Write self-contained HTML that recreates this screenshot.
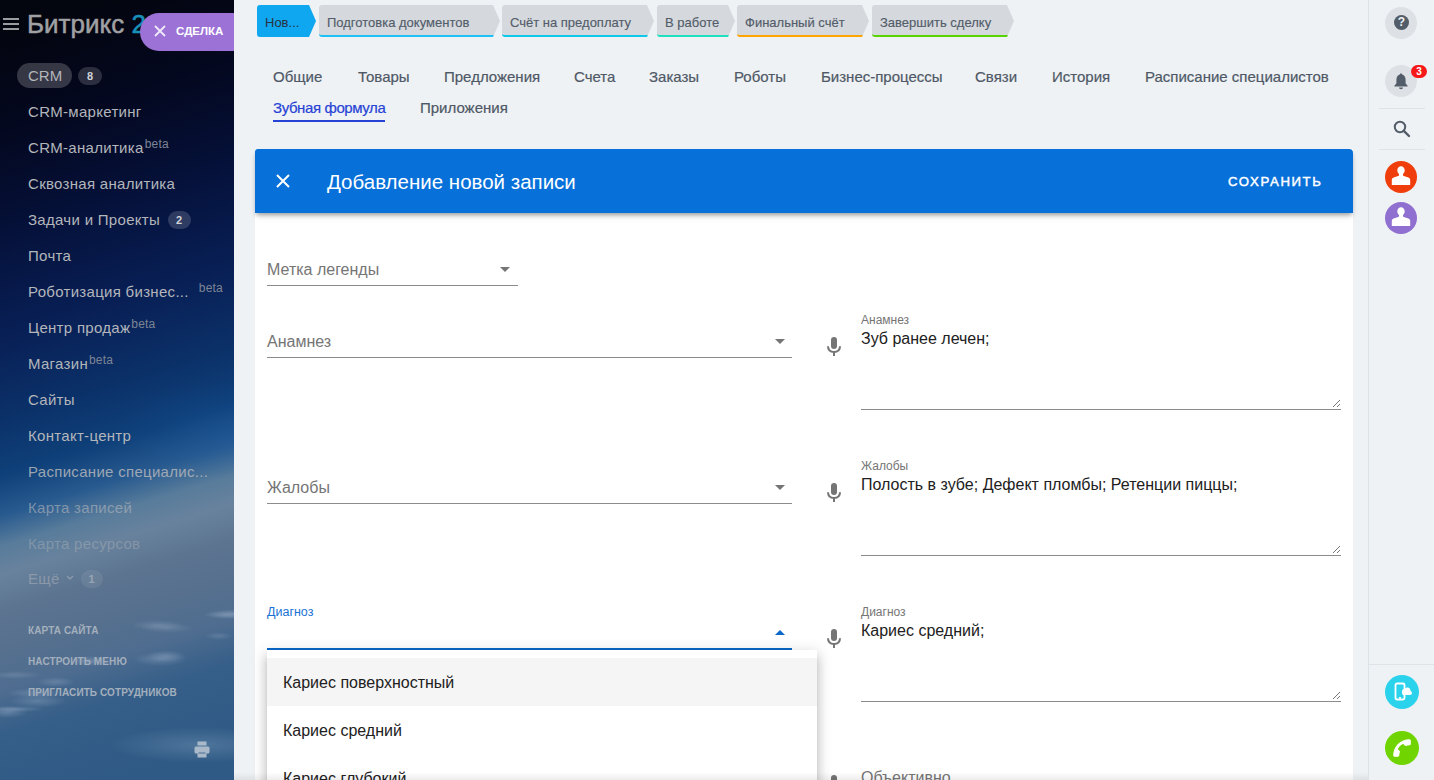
<!DOCTYPE html>
<html><head><meta charset="utf-8">
<style>
*{box-sizing:border-box;margin:0;padding:0}
html,body{width:1434px;height:780px;overflow:hidden;background:#eef2f4;font-family:"Liberation Sans",sans-serif}
.abs{position:absolute}
#side{position:absolute;left:0;top:0;width:234px;height:780px;overflow:hidden;
background:
radial-gradient(ellipse 19px 5px at 56px 682px,rgba(190,205,225,0.24),rgba(190,205,225,0)),
radial-gradient(ellipse 27px 4px at 15px 675px,rgba(190,205,225,0.19),rgba(190,205,225,0)),
radial-gradient(ellipse 27px 5px at 233px 614px,rgba(190,205,225,0.25),rgba(190,205,225,0)),
radial-gradient(ellipse 28px 5px at 35px 693px,rgba(190,205,225,0.26),rgba(190,205,225,0)),
radial-gradient(ellipse 26px 5px at 157px 625px,rgba(190,205,225,0.20),rgba(190,205,225,0)),
radial-gradient(ellipse 21px 6px at 7px 712px,rgba(190,205,225,0.28),rgba(190,205,225,0)),
radial-gradient(ellipse 19px 6px at 167px 656px,rgba(190,205,225,0.22),rgba(190,205,225,0)),
radial-gradient(ellipse 14px 4px at 219px 636px,rgba(190,205,225,0.18),rgba(190,205,225,0)),
radial-gradient(ellipse 23px 4px at 226px 615px,rgba(190,205,225,0.23),rgba(190,205,225,0)),
radial-gradient(ellipse 23px 5px at 90px 661px,rgba(190,205,225,0.29),rgba(190,205,225,0)),
radial-gradient(ellipse 27px 7px at 160px 659px,rgba(190,205,225,0.25),rgba(190,205,225,0)),
radial-gradient(ellipse 29px 7px at 38px 701px,rgba(190,205,225,0.24),rgba(190,205,225,0)),
radial-gradient(ellipse 27px 5px at 167px 628px,rgba(190,205,225,0.19),rgba(190,205,225,0)),
radial-gradient(ellipse 30px 3px at 15px 709px,rgba(190,205,225,0.27),rgba(190,205,225,0)),
radial-gradient(ellipse 90px 18px at 200px 745px,rgba(170,195,220,.25),rgba(170,195,220,0)),
radial-gradient(ellipse 120px 50px at 234px 430px,rgba(20,90,170,.25),rgba(20,90,170,0)),
linear-gradient(163deg,#03050f 34px,#040820 130px,#05113a 225px,#081f55 321px,#0b3068 397px,#0f4079 455px,#285a8f 493px,#587c9b 523px,#68829d 550px,#5c7490 584px,#56708e 622px,#4f6d90 660px,#355e88 703px,#2f5a85 780px)}
.mi{position:absolute;left:28px;font-size:15px;letter-spacing:.3px;color:#b3b6bb;white-space:nowrap}
.mi sup{font-size:12px;color:#7d8595;vertical-align:0;position:relative;top:-5px;margin-left:1px;letter-spacing:.2px}
.cnt{display:inline-block;background:rgba(255,255,255,.16);border-radius:10px;color:#d0d3d8;font-size:11px;font-weight:bold;height:18px;line-height:18px;padding:0 8px;margin-left:8px;vertical-align:1px}
.bl{position:absolute;left:28px;font-size:10px;font-weight:bold;color:#a3afbd;letter-spacing:.1px}
#main{position:absolute;left:234px;top:0;width:1134px;height:780px;background:#eef2f4}
.st{position:absolute;top:5px;height:32px;background:#d5d9de;color:#535c69;font-size:13px;line-height:32px;padding-left:8px;white-space:nowrap}
.tab{position:absolute;font-size:15px;color:#4f5866;white-space:nowrap;-webkit-text-stroke:.2px currentColor}
#rp{position:absolute;left:1368px;top:0;width:66px;height:780px;background:#eef2f4;border-left:1px solid #dbe3e7}

.stg{position:absolute;top:5px;height:32px;line-height:35px;font-size:13px;color:#535c69;-webkit-text-stroke:.15px currentColor;padding-left:8px;white-space:nowrap;background:#d5d9de;border-bottom:2px solid;clip-path:polygon(0 0,calc(100% - 7px) 0,100% 50%,calc(100% - 7px) 100%,0 100%);border-radius:3px 0 0 3px}
#modal{position:absolute;left:255px;top:149px;width:1098px;height:640px;background:#fff}
#mh{position:absolute;left:0;top:0;width:1098px;height:64px;background:#0770d9;border-radius:3px 4px 0 0;box-shadow:0 3px 4px -1px rgba(0,0,0,.3),0 5px 8px -3px rgba(0,0,0,.15);z-index:2}
.sel{position:absolute;left:12px;height:24px;font-size:16px;color:#757575;border-bottom:1px solid #8c8c8c;line-height:16px;white-space:nowrap}
.arr{position:absolute;top:5px;width:0;height:0;border-left:5px solid transparent;border-right:5px solid transparent;border-top:5px solid #757575}
.ta{position:absolute;left:606px;width:480px;height:97px;border-bottom:1px solid #8c8c8c}
.lbl{position:absolute;left:0;top:0;font-size:12px;color:#757575;white-space:nowrap}
.val{position:absolute;left:0;top:17px;font-size:16px;color:#212121;white-space:nowrap}
#dd{position:absolute;left:12px;top:501px;width:550px;height:200px;background:#fff;box-shadow:0 5px 5px -3px rgba(0,0,0,.2),0 8px 10px 1px rgba(0,0,0,.14),0 3px 14px 2px rgba(0,0,0,.12);padding-top:8px;z-index:3}
.it{height:48px;line-height:50px;padding-left:16px;font-size:16px;color:#212121;white-space:nowrap}
#shade{position:absolute;left:234px;top:772px;width:1134px;height:8px;background:linear-gradient(rgba(0,0,0,0),rgba(0,0,0,.07));z-index:5}

.av{left:16px;width:32px;height:32px;border-radius:50%;overflow:hidden}
</style></head><body>
<div id="side">
  <div class="abs" style="left:3px;top:18px;width:16px;height:2px;background:#9a9ca0"></div>
  <div class="abs" style="left:3px;top:23px;width:16px;height:2px;background:#9a9ca0"></div>
  <div class="abs" style="left:3px;top:28px;width:16px;height:2px;background:#9a9ca0"></div>
  <div class="abs" style="left:27px;top:9px;font-size:26px;color:#a0a1a3;white-space:nowrap;-webkit-text-stroke:.5px #a0a1a3">Битрикс <span style="color:#1890b8;-webkit-text-stroke:.5px #1890b8">24</span></div>
  <div class="abs" style="left:140px;top:13px;width:110px;height:38px;border-radius:19px 0 0 19px;background:#9c72d6"></div>
  <div class="abs" style="left:153px;top:24px;width:14px;height:14px">
    <svg width="14" height="14" viewBox="0 0 14 14"><path d="M2 2L12 12M12 2L2 12" stroke="#f0eaf8" stroke-width="1.8"/></svg></div>
  <div class="abs" style="left:176px;top:25px;font-size:11.5px;font-weight:bold;color:#fff;letter-spacing:0">СДЕЛКА</div>
  <div class="abs" style="left:17px;top:63px;width:55px;height:25px;border-radius:13px;background:rgba(255,255,255,.2)"></div>
  <div class="mi" style="top:67px;left:28px;letter-spacing:0">CRM</div>
  <div class="abs" style="left:78px;top:67px;width:24px;height:18px;border-radius:9px;background:rgba(255,255,255,.16);color:#d0d3d8;font-size:11px;font-weight:bold;text-align:center;line-height:18px">8</div>
  <div class="mi" style="top:103px">CRM-маркетинг</div>
  <div class="mi" style="top:139px">CRM-аналитика<sup>beta</sup></div>
  <div class="mi" style="top:175px">Сквозная аналитика</div>
  <div class="mi" style="top:211px">Задачи и Проекты<span class="cnt">2</span></div>
  <div class="mi" style="top:247px">Почта</div>
  <div class="mi" style="top:283px">Роботизация бизнес...<sup style="margin-left:10px">beta</sup></div>
  <div class="mi" style="top:319px">Центр продаж<sup>beta</sup></div>
  <div class="mi" style="top:355px">Магазин<sup>beta</sup></div>
  <div class="mi" style="top:391px">Сайты</div>
  <div class="mi" style="top:427px">Контакт-центр</div>
  <div class="mi" style="top:463px;opacity:.85">Расписание специалис...</div>
  <div class="mi" style="top:499px;opacity:.6">Карта записей</div>
  <div class="mi" style="top:535px;opacity:.42">Карта ресурсов</div>
  <div class="mi" style="top:570px;opacity:.5">Ещё<svg width="14" height="10" style="margin-left:3px;vertical-align:1px"><path d="M4 3L7 6L10 3" stroke="#babdc2" stroke-width="1.3" fill="none"/></svg><span class="cnt" style="margin-left:4px">1</span></div>
  <div class="bl" style="top:625px">КАРТА САЙТА</div>
  <div class="bl" style="top:656px">НАСТРОИТЬ МЕНЮ</div>
  <div class="bl" style="top:687px">ПРИГЛАСИТЬ СОТРУДНИКОВ</div>
  <svg class="abs" style="left:194px;top:741px" width="16" height="17" viewBox="0 0 16 17"><rect x="3.5" y="0.5" width="9" height="4" fill="#a9b9c9"/><rect x="0.5" y="5.5" width="15" height="7" rx="1.5" fill="#a9b9c9"/><rect x="3.5" y="10" width="9" height="6.5" fill="#a9b9c9"/><rect x="4.5" y="11.5" width="7" height="1" fill="#4a6f96"/></svg>
</div>

<div id="main">
  <svg class="abs" style="left:23px;top:5px" width="60" height="32"><path d="M3 0H52L59 16L52 32H3Q0 32 0 29V3Q0 0 3 0Z" fill="#0fa7f0"/></svg>
  <div class="abs" style="left:31px;top:6.5px;line-height:32px;font-size:13px;color:#2a3140">Нов...</div>
  <div class="stg" style="left:85px;width:181px;border-color:#1ec1f5">Подготовка документов</div>
  <div class="stg" style="left:268px;width:152px;border-color:#0fc8ea">Счёт на предоплату</div>
  <div class="stg" style="left:423px;width:78px;border-color:#1fe0bd">В работе</div>
  <div class="stg" style="left:503px;width:132px;border-color:#ffa400">Финальный счёт</div>
  <div class="stg" style="left:638px;width:142px;border-color:#5ad400">Завершить сделку</div>

  <div class="tab" style="left:39px;top:68px">Общие</div>
  <div class="tab" style="left:124px;top:68px">Товары</div>
  <div class="tab" style="left:210px;top:68px">Предложения</div>
  <div class="tab" style="left:340px;top:68px">Счета</div>
  <div class="tab" style="left:415px;top:68px">Заказы</div>
  <div class="tab" style="left:500px;top:68px">Роботы</div>
  <div class="tab" style="left:587px;top:68px">Бизнес-процессы</div>
  <div class="tab" style="left:741px;top:68px">Связи</div>
  <div class="tab" style="left:818px;top:68px">История</div>
  <div class="tab" style="left:911px;top:68px">Расписание специалистов</div>
  <div class="tab" style="left:39px;top:99px;color:#2743d6;letter-spacing:-.4px">Зубная формула</div>
  <div class="abs" style="left:39px;top:120px;width:112px;height:2px;background:#2743d6"></div>
  <div class="tab" style="left:186px;top:99px">Приложения</div>
</div>
<div id="modal">
  <div id="mh">
    <svg class="abs" style="left:21px;top:25px" width="14" height="14" viewBox="0 0 14 14"><path d="M1 1L13 13M13 1L1 13" stroke="#fff" stroke-width="2"/></svg>
    <div class="abs" style="left:72px;top:21px;font-size:20.5px;color:#fff;white-space:nowrap">Добавление новой записи</div>
    <div class="abs" style="left:973px;top:25px;font-size:13.2px;color:#fff;letter-spacing:1.6px;-webkit-text-stroke:.45px #fff">СОХРАНИТЬ</div>
  </div>
  <!-- selects -->
  <div class="sel" style="top:113px;width:251px">Метка легенды<i class="arr" style="left:233px"></i></div>
  <div class="sel" style="top:185px;width:525px">Анамнез<i class="arr" style="left:508px"></i></div>
  <div class="sel" style="top:331px;width:525px">Жалобы<i class="arr" style="left:508px"></i></div>
  <div class="abs" style="left:12px;top:456px;font-size:12.5px;color:#1a73d4">Диагноз</div>
  <div class="abs" style="left:12px;top:499px;width:525px;height:2px;background:#0b68c9"></div>
  <svg class="abs" style="left:520px;top:481px" width="10" height="5"><path d="M0 5L5 0L10 5Z" fill="#0b68c9"/></svg>
  <!-- mics -->
  <svg class="abs" style="left:572px;top:188px" width="14" height="19" viewBox="0 0 14 19"><rect x="4" y="0" width="6" height="12" rx="3" fill="#757575"/><path d="M1 9.3Q1 15 7 15Q13 15 13 9.3" stroke="#757575" stroke-width="2" fill="none"/><rect x="6" y="14.5" width="2" height="4.5" fill="#757575"/></svg> <svg class="abs" style="left:572px;top:334px" width="14" height="19" viewBox="0 0 14 19"><rect x="4" y="0" width="6" height="12" rx="3" fill="#757575"/><path d="M1 9.3Q1 15 7 15Q13 15 13 9.3" stroke="#757575" stroke-width="2" fill="none"/><rect x="6" y="14.5" width="2" height="4.5" fill="#757575"/></svg> <svg class="abs" style="left:572px;top:480px" width="14" height="19" viewBox="0 0 14 19"><rect x="4" y="0" width="6" height="12" rx="3" fill="#757575"/><path d="M1 9.3Q1 15 7 15Q13 15 13 9.3" stroke="#757575" stroke-width="2" fill="none"/><rect x="6" y="14.5" width="2" height="4.5" fill="#757575"/></svg> <svg class="abs" style="left:572px;top:626px" width="14" height="19" viewBox="0 0 14 19"><rect x="4" y="0" width="6" height="12" rx="3" fill="#757575"/><path d="M1 9.3Q1 15 7 15Q13 15 13 9.3" stroke="#757575" stroke-width="2" fill="none"/><rect x="6" y="14.5" width="2" height="4.5" fill="#757575"/></svg>
  <!-- textareas -->
  <div class="ta" style="top:164px">
    <div class="lbl">Анамнез</div><div class="val">Зуб ранее лечен;</div></div>
  <div class="ta" style="top:310px">
    <div class="lbl">Жалобы</div><div class="val">Полость в зубе; Дефект пломбы; Ретенции пиццы;</div></div>
  <div class="ta" style="top:456px">
    <div class="lbl">Диагноз</div><div class="val">Кариес средний;</div></div>
  <div class="abs" style="left:606px;top:620px;font-size:16px;color:#757575">Объективно</div>
  <svg class="abs" style="left:1076px;top:249px" width="10" height="10"><path d="M9 2L2 9M9 6L6 9" stroke="#777" stroke-width="1"/></svg><svg class="abs" style="left:1076px;top:395px" width="10" height="10"><path d="M9 2L2 9M9 6L6 9" stroke="#777" stroke-width="1"/></svg><svg class="abs" style="left:1076px;top:541px" width="10" height="10"><path d="M9 2L2 9M9 6L6 9" stroke="#777" stroke-width="1"/></svg>
  <!-- dropdown -->
  <div id="dd">
    <div class="it" style="background:#f5f5f5">Кариес поверхностный</div>
    <div class="it">Кариес средний</div>
    <div class="it">Кариес глубокий</div>
  </div>
</div>
<div id="shade"></div>

<div id="rp">
  <div class="abs" style="left:16px;top:7px;width:32px;height:32px;border-radius:50%;background:#dde1e5"></div>
  <div class="abs" style="left:25px;top:15px;width:15px;height:15px;border-radius:50%;background:#535c69;color:#eef2f4;font-size:12px;font-weight:bold;text-align:center;line-height:15px">?</div>
  <div class="abs" style="left:16px;top:65px;width:32px;height:32px;border-radius:50%;background:#dde1e5"></div>
  <svg class="abs" style="left:24px;top:72px" width="16" height="18" viewBox="0 0 16 18"><path d="M8 1.5C8.8 1.5 9.2 2 9.2 2.6C11.6 3.3 12.6 5.2 12.6 8V11.5L14.5 13.5V14.5H1.5V13.5L3.4 11.5V8C3.4 5.2 4.4 3.3 6.8 2.6C6.8 2 7.2 1.5 8 1.5Z" fill="#535c69"/><path d="M6 15.5H10Q10 17.3 8 17.3Q6 17.3 6 15.5Z" fill="#535c69"/></svg>
  <div class="abs" style="left:42px;top:65px;width:16px;height:13px;border-radius:7px;background:#f51919;color:#fff;font-size:10px;font-weight:bold;text-align:center;line-height:13px">3</div>
  <div class="abs" style="left:10px;top:108px;width:46px;height:1px;background:#dde3e7"></div>
  <svg class="abs" style="left:24px;top:120px" width="18" height="18" viewBox="0 0 18 18"><circle cx="7" cy="7" r="5.2" stroke="#535c69" stroke-width="2" fill="none"/><path d="M10.8 10.8L16 16" stroke="#535c69" stroke-width="2.4" stroke-linecap="round"/></svg>
  <div class="abs" style="left:10px;top:149px;width:46px;height:1px;background:#dde3e7"></div>
  <div class="abs av" style="top:161px;background:#ef3e0c"><svg width="32" height="32" viewBox="0 0 32 32" style="position:absolute;left:0;top:0"><path d="M16 5.2c2.1 0 3.7 1.8 3.7 4.1 0 1.6-.7 3-1.7 3.7v.9c0 .5.3.9.8 1.1l4.6 1.5c1.2.4 1.8 1.4 1.8 2.5V24H6.8v-5c0-1.1.6-2.1 1.8-2.5l4.6-1.5c.5-.2.8-.6.8-1.1V13c-1-.7-1.7-2.1-1.7-3.7 0-2.3 1.6-4.1 3.7-4.1z" fill="#fff"/></svg></div>
  <div class="abs av" style="top:202px;background:#8f6fd0"><svg width="32" height="32" viewBox="0 0 32 32" style="position:absolute;left:0;top:0"><path d="M16 5.2c2.1 0 3.7 1.8 3.7 4.1 0 1.6-.7 3-1.7 3.7v.9c0 .5.3.9.8 1.1l4.6 1.5c1.2.4 1.8 1.4 1.8 2.5V24H6.8v-5c0-1.1.6-2.1 1.8-2.5l4.6-1.5c.5-.2.8-.6.8-1.1V13c-1-.7-1.7-2.1-1.7-3.7 0-2.3 1.6-4.1 3.7-4.1z" fill="#fff"/></svg></div>
  <div class="abs" style="left:0;top:664px;width:66px;height:1px;background:#dde3e7"></div>
  <div class="abs" style="left:16px;top:675px;width:34px;height:34px;border-radius:50%;background:#2bd2ec"></div>
  <svg class="abs" style="left:24px;top:682px" width="20" height="20" viewBox="0 0 20 20"><rect x="2.5" y="1.5" width="9" height="16" rx="1.5" stroke="#fff" stroke-width="1.8" fill="none"/><path d="M9 9.5Q9 7 11.5 7Q12.5 5 15 5.5Q17.5 6 17.5 9Q19 9.5 19 11.2Q19 13 17 13H10.5Q9 13 9 11.3Z" fill="#fff"/><rect x="6" y="15" width="2" height="1.5" fill="#fff"/></svg>
  <div class="abs" style="left:16px;top:731px;width:34px;height:34px;border-radius:50%;background:#6fd400"></div>
  <svg class="abs" style="left:22px;top:737px" width="22" height="22" viewBox="0 0 24 24"><g transform="rotate(90 12 12)"><path d="M6.62 10.79c1.44 2.83 3.76 5.14 6.59 6.59l2.2-2.2c.27-.27.67-.36 1.020-.24 1.12.37 2.33.57 3.57.57.55 0 1 .45 1 1V20c0 .55-.45 1-1 1-9.39 0-17-7.61-17-17 0-.55.45-1 1-1h3.5c.55 0 1 .45 1 1 0 1.25.2 2.45.57 3.57.11.35.03.74-.25 1.020l-2.2 2.2z" fill="#fff" stroke="#fff" stroke-width="1.2" stroke-linejoin="round"/></g></svg>
</div>
</body></html>
